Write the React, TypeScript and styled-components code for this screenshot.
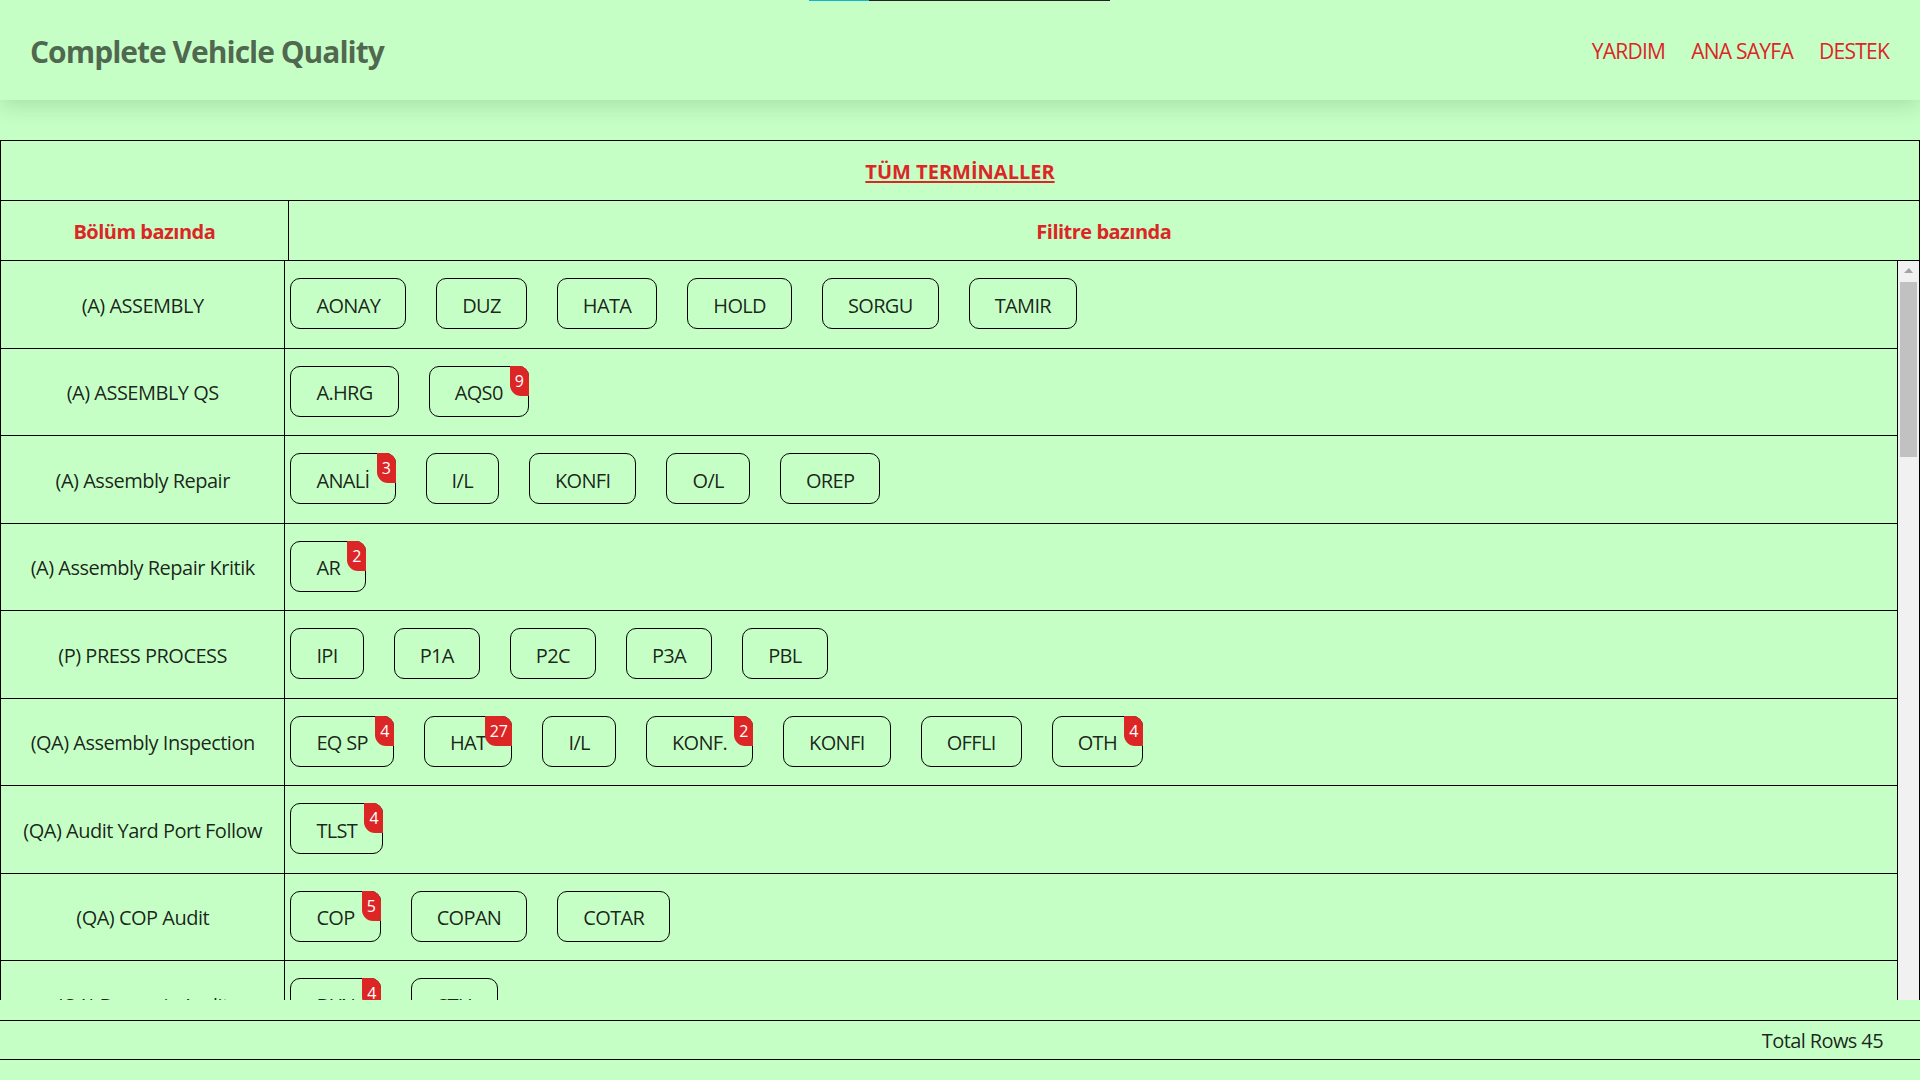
import React from "react";
import styled, { createGlobalStyle } from "styled-components";

const GlobalStyle = createGlobalStyle`
  html, body {
    margin: 0;
    padding: 0;
    background: #c6ffc6;
    font-family: "Open Sans", "Noto Sans", sans-serif;
  }
  * { box-sizing: border-box; }
`;

type Item = { label: string; count?: number };
type Row = { name: string; items: Item[] };

const rows: Row[] = [
  { name: "(A) ASSEMBLY", items: [{ label: "AONAY" }, { label: "DUZ" }, { label: "HATA" }, { label: "HOLD" }, { label: "SORGU" }, { label: "TAMIR" }] },
  { name: "(A) ASSEMBLY QS", items: [{ label: "A.HRG" }, { label: "AQS0", count: 9 }] },
  { name: "(A) Assembly Repair", items: [{ label: "ANALİ", count: 3 }, { label: "I/L" }, { label: "KONFI" }, { label: "O/L" }, { label: "OREP" }] },
  { name: "(A) Assembly Repair Kritik", items: [{ label: "AR", count: 2 }] },
  { name: "(P) PRESS PROCESS", items: [{ label: "IPI" }, { label: "P1A" }, { label: "P2C" }, { label: "P3A" }, { label: "PBL" }] },
  { name: "(QA) Assembly Inspection", items: [{ label: "EQ SP", count: 4 }, { label: "HAT", count: 27 }, { label: "I/L" }, { label: "KONF.", count: 2 }, { label: "KONFI" }, { label: "OFFLI" }, { label: "OTH", count: 4 }] },
  { name: "(QA) Audit Yard Port Follow", items: [{ label: "TLST", count: 4 }] },
  { name: "(QA) COP Audit", items: [{ label: "COP", count: 5 }, { label: "COPAN" }, { label: "COTAR" }] },
  { name: "(QA) Dynamic Audit", items: [{ label: "DYN", count: 4 }, { label: "STU" }] },
  { name: "(QA) Final Inspection", items: [{ label: "FINAL" }, { label: "HATA" }, { label: "OK" }] },
  { name: "(QA) Paint Audit", items: [{ label: "PAUD" }, { label: "PNT", count: 3 }] },
  { name: "(QA) Road Test", items: [{ label: "ROAD" }, { label: "RT", count: 1 }] },
  { name: "(QA) Shower Test", items: [{ label: "SHWR" }, { label: "SU" }] },
  { name: "(QA) Static Audit", items: [{ label: "STA" }, { label: "STAT", count: 2 }] },
  { name: "(QA) Water Test", items: [{ label: "WTR" }] },
  { name: "(B) BODY", items: [{ label: "BAGL" }, { label: "BHAT" }, { label: "BOD" }] },
  { name: "(B) BODY QS", items: [{ label: "B.HRG" }, { label: "BQS0", count: 6 }] },
  { name: "(B) Body Repair", items: [{ label: "BREP" }, { label: "I/L" }, { label: "O/L" }] },
  { name: "(P) PAINT", items: [{ label: "PAINT" }, { label: "PHAT", count: 1 }, { label: "PTAM" }] },
  { name: "(P) Paint Repair", items: [{ label: "PREP" }, { label: "SPOT" }] },
  { name: "(PT) POWERTRAIN", items: [{ label: "ENG" }, { label: "TRN" }] },
  { name: "(W) WELDING", items: [{ label: "WELD" }, { label: "WHAT", count: 2 }] },
  { name: "(W) Welding Repair", items: [{ label: "WREP" }] },
  { name: "(L) LOGISTICS", items: [{ label: "LOG" }, { label: "PART" }] },
  { name: "(L) Supplier Quality", items: [{ label: "SQ", count: 5 }, { label: "SUPP" }] },
  { name: "(E) ELECTRICAL", items: [{ label: "ECU" }, { label: "ELEK", count: 3 }] },
  { name: "(E) Electrical Repair", items: [{ label: "EREP" }] },
  { name: "(T) TRIM", items: [{ label: "TRIM" }, { label: "TRM1" }] },
  { name: "(T) Trim Repair", items: [{ label: "TREP", count: 1 }] },
  { name: "(C) CHASSIS", items: [{ label: "CHS" }, { label: "CHS2" }] },
  { name: "(C) Chassis Repair", items: [{ label: "CREP" }] },
  { name: "(QA) Customer Audit", items: [{ label: "CAUD", count: 2 }, { label: "CUST" }] },
  { name: "(QA) Launch Quality", items: [{ label: "LQ" }, { label: "PILOT" }] },
  { name: "(QA) Warranty", items: [{ label: "WAR", count: 7 }, { label: "WRNT" }] },
  { name: "(QA) Yard Audit", items: [{ label: "YARD" }] },
];

const Page = styled.div`
  position: relative;
  width: 1920px;
`;

const Progress = styled.div`
  position: absolute;
  top: 0;
  left: 809px;
  width: 301px;
  height: 1px;
  background: #222;
  z-index: 5;
`;

const ProgressFill = styled.div`
  width: 60px;
  height: 100%;
  background: #12b5cb;
`;

const TopBar = styled.header`
  position: relative;
  z-index: 2;
  height: 100px;
  display: flex;
  align-items: center;
  justify-content: space-between;
  padding: 2px 31px 0 30px;
  background: #c6ffc6;
  box-shadow: 0 4px 22px rgba(0, 60, 0, 0.18);
`;

const Brand = styled.div`
  font-size: 30px;
  font-weight: 700;
  letter-spacing: -1px;
  color: rgba(0, 0, 0, 0.6);
`;

const Nav = styled.nav`
  display: flex;
  gap: 26px;
`;

const NavLink = styled.a`
  font-size: 21px;
  letter-spacing: -0.75px;
  color: #dc2626;
  text-decoration: none;
  cursor: pointer;
`;

const Main = styled.main`
  margin-top: 40px;
`;

const HeadTable = styled.div`
  border: 1px solid #000;
`;

const TerminalRow = styled.div`
  height: 60px;
  border-bottom: 1px solid #000;
  display: flex;
  align-items: center;
  justify-content: center;
  padding-top: 2px;
`;

const TerminalLink = styled.a`
  font-size: 20px;
  font-weight: 700;
  color: #dc2626;
  text-decoration: underline;
  text-decoration-thickness: 2px;
  text-underline-offset: 2px;
  cursor: pointer;
`;

const ColRow = styled.div`
  display: grid;
  grid-template-columns: 15% 85%;
  height: 59px;
`;

const ColHead = styled.div<{ $divider?: boolean }>`
  display: flex;
  align-items: center;
  justify-content: center;
  padding-top: 2px;
  font-size: 20px;
  font-weight: 700;
  letter-spacing: -0.5px;
  color: #dc2626;
  border-right: ${(p) => (p.$divider ? "1px solid #000" : "none")};
`;

const BodyFrame = styled.div`
  display: flex;
  height: 739px;
  border-right: 1px solid #000;
`;

const BodyViewport = styled.div`
  flex: 1;
  min-width: 0;
  overflow-y: auto;
  scrollbar-width: none;
`;

const ScrollRail = styled.div`
  width: 21px;
  flex: none;
  background: #f1f1f1;
  display: flex;
  flex-direction: column;
  align-items: stretch;
`;

const RailArrow = styled.div`
  height: 20px;
  display: flex;
  align-items: center;
  justify-content: center;
  padding-bottom: 1px;

  &::before {
    content: "";
    width: 0;
    height: 0;
    border-left: 5px solid transparent;
    border-right: 4px solid transparent;
    border-bottom: 5px solid #a3a3a3;
  }
`;

const RailThumb = styled.div`
  height: 175px;
  margin: 1px 2px 0 2px;
  background: #c1c1c1;
`;

const BodyRow = styled.div`
  display: grid;
  grid-template-columns: 15% 85%;
  border-left: 1px solid #000;
  border-right: 1px solid #000;
  border-bottom: 1px solid #000;
  height: 87.5px;
`;

const SectionCell = styled.div`
  display: flex;
  align-items: center;
  justify-content: center;
  padding-top: 2px;
  border-right: 1px solid #000;
  font-size: 20px;
  letter-spacing: -0.5px;
  color: rgba(0, 0, 0, 0.87);
  white-space: nowrap;
`;

const FilterCell = styled.div`
  display: flex;
  align-items: flex-start;
  gap: 30px;
  padding: 17px 0 0 5px;
`;

const FilterButton = styled.button`
  position: relative;
  height: 51px;
  padding: 3px 25px 0;
  border: 1px solid #000;
  border-radius: 10px;
  background: transparent;
  font-family: "Open Sans", "Noto Sans", sans-serif;
  font-size: 20px;
  letter-spacing: -0.65px;
  color: rgba(0, 0, 0, 0.87);
  display: inline-flex;
  align-items: center;
  justify-content: center;
  cursor: pointer;
`;

const Badge = styled.span`
  position: absolute;
  top: -1px;
  right: -1px;
  height: 30px;
  min-width: 18px;
  padding: 0 5px;
  background: #dc2626;
  color: #fff;
  font-size: 16px;
  letter-spacing: -0.3px;
  line-height: 30px;
  text-align: center;
  border-radius: 0 10px 0 11px;
`;

const Footer = styled.footer`
  margin-top: 20px;
  height: 40px;
  border-top: 1px solid #000;
  border-bottom: 1px solid #000;
  display: flex;
  align-items: center;
  justify-content: flex-end;
  padding: 1px 37px 0 0;
  font-size: 20px;
  letter-spacing: -0.6px;
  color: rgba(0, 0, 0, 0.87);
`;

export default function App() {
  return (
    <Page>
      <GlobalStyle />
      <Progress>
        <ProgressFill />
      </Progress>
      <TopBar>
        <Brand>Complete Vehicle Quality</Brand>
        <Nav>
          <NavLink>YARDIM</NavLink>
          <NavLink>ANA SAYFA</NavLink>
          <NavLink>DESTEK</NavLink>
        </Nav>
      </TopBar>
      <Main>
        <HeadTable>
          <TerminalRow>
            <TerminalLink>TÜM TERMİNALLER</TerminalLink>
          </TerminalRow>
          <ColRow>
            <ColHead $divider>Bölüm bazında</ColHead>
            <ColHead>Filitre bazında</ColHead>
          </ColRow>
        </HeadTable>
        <BodyFrame>
          <BodyViewport>
            {rows.map((r) => (
              <BodyRow key={r.name}>
                <SectionCell>{r.name}</SectionCell>
                <FilterCell>
                  {r.items.map((it, i) => (
                    <FilterButton key={i}>
                      {it.label}
                      {it.count !== undefined && <Badge>{it.count}</Badge>}
                    </FilterButton>
                  ))}
                </FilterCell>
              </BodyRow>
            ))}
          </BodyViewport>
          <ScrollRail>
            <RailArrow />
            <RailThumb />
          </ScrollRail>
        </BodyFrame>
        <Footer>Total Rows 45</Footer>
      </Main>
    </Page>
  );
}
